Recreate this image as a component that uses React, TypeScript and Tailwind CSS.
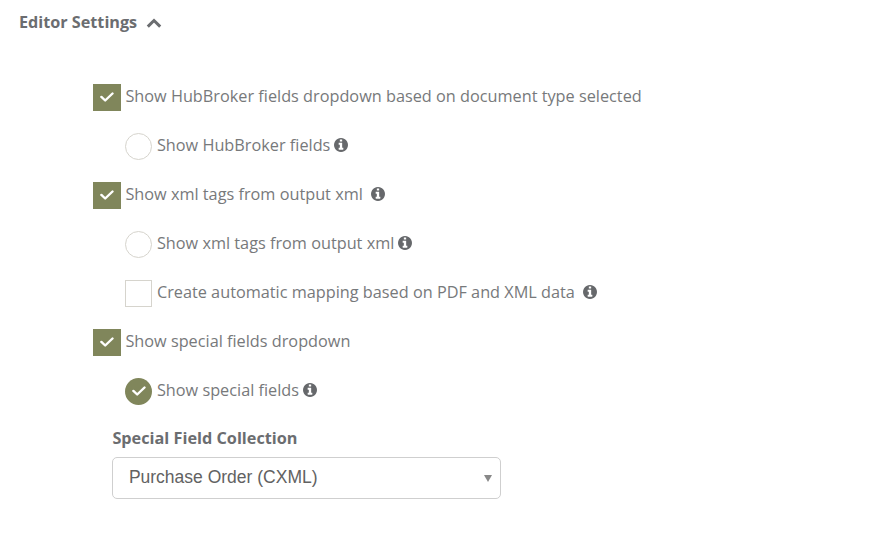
import type { ReactNode } from "react";

type OptionProps = {
  label: string;
  checked?: boolean;
  round?: boolean;
  nested?: boolean;
  info?: string;
};

function InfoIcon({ className }: { className: string }) {
  return (
    <svg viewBox="0 0 1536 1536" fill="currentColor" className={`size-3.5 shrink-0 text-[#66686b] ${className}`}>
      <path d="M1024 1248v-160q0-14-9-23t-23-9h-96v-512q0-14-9-23t-23-9h-320q-14 0-23 9t-9 23v160q0 14 9 23t23 9h96v320h-96q-14 0-23 9t-9 23v160q0 14 9 23t23 9h448q14 0 23-9t9-23zm-128-896v-160q0-14-9-23t-23-9h-192q-14 0-23 9t-9 23v160q0 14 9 23t23 9h192q14 0 23-9t9-23zm640 416q0 209-103 385.5t-279.5 279.5-385.5 103-385.5-103-279.5-279.5-103-385.5 103-385.5 279.5-279.5 385.5-103 385.5 103 279.5 279.5 103 385.5z" />
    </svg>
  );
}

function Mark({ checked, round }: { checked?: boolean; round?: boolean }) {
  const shape = round ? "rounded-full" : "";
  const fill = checked ? "bg-[#80865b]" : "border border-[#d6d4cd] bg-white";
  const width = checked && !round ? "w-7" : "w-[27px]";
  return (
    <span className={`mt-[3px] flex h-[27px] shrink-0 items-center justify-center ${width} ${shape} ${fill}`}>
      {checked && (
        <svg viewBox="0 0 14 10" className="h-2.5 w-3.5" fill="none" stroke="white" strokeWidth="2.4" strokeLinecap="round" strokeLinejoin="round">
          <path d="M1.4 4.9 5.2 8.5 12.5 1.5" />
        </svg>
      )}
    </span>
  );
}

function Option({ label, checked, round, nested, info }: OptionProps) {
  return (
    <label className={`flex h-[49px] items-center ${nested ? "pl-8" : ""}`}>
      <Mark checked={checked} round={round} />
      <span className={`text-[16.27px] leading-6 whitespace-nowrap text-[#77797b] ${nested ? "ml-[4.5px]" : "ml-1"}`}>
        {label}
      </span>
      {info && <InfoIcon className={info} />}
    </label>
  );
}

function Field({ label, children }: { label: string; children: ReactNode }) {
  return (
    <div className="ml-[19px] w-[389px]">
      <div className="h-[43px] pt-3 text-[16.25px] leading-6 font-bold">{label}</div>
      {children}
    </div>
  );
}

export default function App() {
  return (
    <div className="h-[553px] w-[887px] overflow-hidden bg-white font-['Open_Sans','Noto_Sans',sans-serif] text-[#6b6d70]">
      <h3 className="flex h-[71px] items-start pt-2.5 pl-[19px] text-[16.2px] leading-6 font-bold">
        Editor Settings
        <svg viewBox="0 0 16 10" className="mt-2 ml-[9px] h-2.5 w-4" fill="none" stroke="currentColor" strokeWidth="3">
          <path d="M1.8 8.6 8 2.5 14.2 8.6" />
        </svg>
      </h3>
      <div className="pl-[93.4px]">
        <Option label="Show HubBroker fields dropdown based on document type selected" checked />
        <Option label="Show HubBroker fields" round nested info="ml-1" />
        <Option label="Show xml tags from output xml" checked info="ml-2" />
        <Option label="Show xml tags from output xml" round nested info="ml-1" />
        <Option label="Create automatic mapping based on PDF and XML data" nested info="ml-2" />
        <Option label="Show special fields dropdown" checked />
        <Option label="Show special fields" checked round nested info="ml-1" />
        <Field label="Special Field Collection">
          <div className="flex h-[42px] items-center justify-between rounded-[5px] border border-[#cfcfcf] pr-2 pl-[15.5px] font-['Liberation_Sans',sans-serif] text-[17.5px] text-[#626262]">
            <span className="-mt-0.5">Purchase Order (CXML)</span>
            <svg viewBox="0 0 8 7" className="h-[7px] w-2" fill="#888888">
              <path d="M0 0h8L4 7z" />
            </svg>
          </div>
        </Field>
      </div>
    </div>
  );
}
